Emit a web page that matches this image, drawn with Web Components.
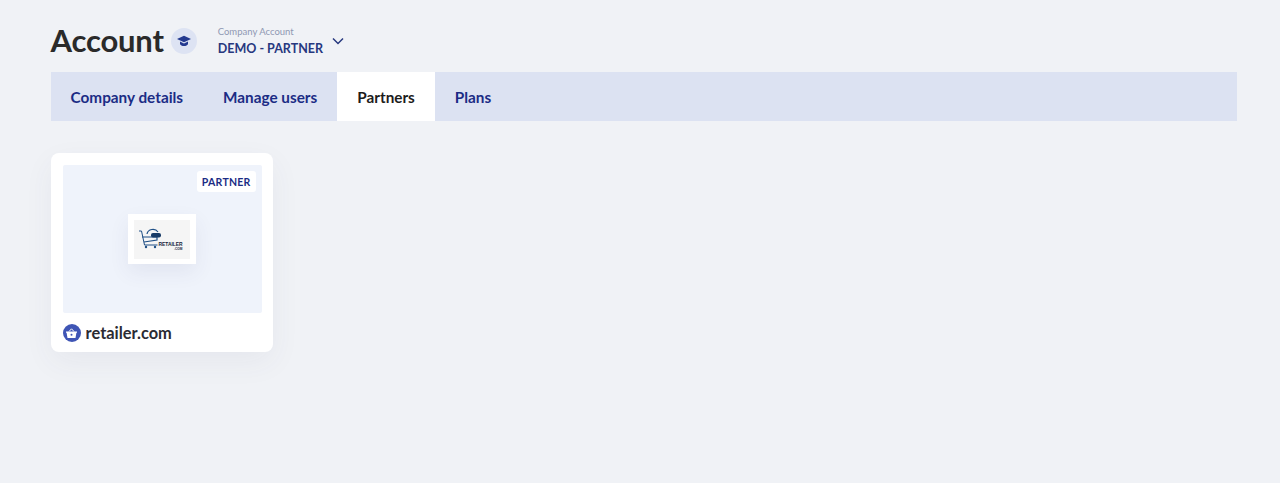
<!DOCTYPE html>
<html lang="en">
<head>
<meta charset="utf-8">
<title>Account</title>
<style>
    html, body { margin: 0; padding: 0; height: 100%; }
    body { background: #f0f2f6; font-family: Lato, "Open Sans", sans-serif; color: #2b2b2b; }
</style>
</head>
<body>
<account-page>
    <account-header slot="header" heading="Account" label="Company Account" company="DEMO - PARTNER"></account-header>
    <tab-bar slot="tabs">
        <tab-item>Company details</tab-item>
        <tab-item>Manage users</tab-item>
        <tab-item active>Partners</tab-item>
        <tab-item>Plans</tab-item>
    </tab-bar>
    <partner-card name="retailer.com" badge="PARTNER"></partner-card>
</account-page>

<script>
'use strict';

(function() {
    class AccountPage extends HTMLElement {
        constructor() {
            super();
            const shadow = this.attachShadow({ mode: 'open' });
            shadow.innerHTML = `
                <style>
                    :host { display: block; padding: 0 43.5px 0 50.6px; }
                    .cards { display: flex; gap: 24px; padding-top: 32px; }
                </style>
                <slot name="header"></slot>
                <slot name="tabs"></slot>
                <div class="cards"><slot></slot></div>
            `;
        }
    }

    class AccountHeader extends HTMLElement {
        constructor() {
            super();
            const shadow = this.attachShadow({ mode: 'open' });
            shadow.innerHTML = `
                <style>
                    :host { display: flex; align-items: flex-start; height: 72px; box-sizing: border-box; }
                    h1 { margin: 21px 0 0; font-size: 31px; line-height: 38px; font-weight: 700; color: #2a2a2a; letter-spacing: -.2px; }
                    .cap { width: 26px; height: 26px; margin: 28px 0 0 7px; border-radius: 50%; background: #dde3f3; display: flex; align-items: center; justify-content: center; }
                    .company { margin: 26px 0 0 21px; }
                    .label { font-size: 9.5px; line-height: 12px; color: #8f98b3; }
                    .name { font-size: 12.5px; line-height: 16px; margin-top: 3px; font-weight: 700; color: #27387f; }
                    .chev { margin: 37px 0 0 9px; display: block; }
                </style>
                <h1>${this.getAttribute('heading')}</h1>
                <span class="cap">
                    <svg width="14" height="12" viewBox="0 0 14 12"><path fill="#23398f" d="M7 .8 14 4 7 7.2 0 4z"/><path fill="#23398f" d="M3 6.6 7 8.4l4-1.8v2.6C10 10.5 8.500 11 7 11s-3-.5-4-1.800z"/></svg>
                </span>
                <div class="company">
                    <div class="label">${this.getAttribute('label')}</div>
                    <div class="name">${this.getAttribute('company')}</div>
                </div>
                <svg class="chev" width="12" height="8" viewBox="0 0 12 8"><path d="M1 1.5 6 6.5 11 1.5" fill="none" stroke="#27387f" stroke-width="1.5"/></svg>
            `;
        }
    }

    class TabBar extends HTMLElement {
        constructor() {
            super();
            const shadow = this.attachShadow({ mode: 'open' });
            shadow.innerHTML = `
                <style>
                    :host { display: flex; height: 49px; background: #dce2f2; }
                </style>
                <slot></slot>
            `;
        }
    }

    class TabItem extends HTMLElement {
        constructor() {
            super();
            const shadow = this.attachShadow({ mode: 'open' });
            shadow.innerHTML = `
                <style>
                    :host { display: flex; align-items: center; padding: 0 20px; font-size: 15.3px; font-weight: 700; color: #1b2c85; }
                    :host([active]) { background: #fff; color: #1c1c1c; }
                </style>
                <slot></slot>
            `;
        }
    }

    class PartnerCard extends HTMLElement {
        constructor() {
            super();
            const shadow = this.attachShadow({ mode: 'open' });
            shadow.innerHTML = `
                <style>
                    :host { display: block; width: 222px; height: 199px; box-sizing: border-box; padding: 12px 11px 0 12px; background: #fff; border-radius: 8px; box-shadow: 0 10px 30px rgba(60, 70, 110, .06); }
                    .image { position: relative; height: 148px; background: #eff3fb; border-radius: 2px; display: flex; align-items: center; justify-content: center; }
                    .badge { position: absolute; top: 6px; right: 6px; height: 21px; padding: 0 5px; display: flex; align-items: center; background: #fff; border-radius: 3px; font-size: 10.5px; font-weight: 700; letter-spacing: .25px; color: #1b2c85; }
                    .logo { width: 68px; height: 50px; margin-right: 1px; box-sizing: border-box; padding: 6px 6px 5px; background: #fff; box-shadow: 0 8px 20px rgba(60, 70, 110, .08); }
                    .logo svg { display: block; }
                    .foot { display: flex; align-items: center; gap: 5px; margin-top: 10px; font-size: 16.4px; line-height: 20px; font-weight: 700; color: #2b2b33; }
                    .basket { width: 18px; height: 18px; border-radius: 50%; background: #3f55b5; display: flex; align-items: center; justify-content: center; }
                </style>
                <div class="image">
                    <span class="badge">${this.getAttribute('badge')}</span>
                    <div class="logo">
                        <svg width="56" height="39" viewBox="0 0 56 39">
                            <rect width="56" height="39" fill="#f5f5f5"/>
                            <path d="M5 11h2.500l3 14h13" fill="none" stroke="#1f4f86" stroke-width="1"/>
                            <path d="M8 17h15v3l-13 2" fill="none" stroke="#1f4f86" stroke-width="1.2"/>
                            <circle cx="12" cy="27" r="1.2" fill="#1f4f86"/>
                            <circle cx="21" cy="27" r="1.200" fill="#1f4f86"/>
                            <path d="M13 14a6 5.500 0 0 1 11-2" fill="none" stroke="#1f4f86" stroke-width="1.200"/>
                            <rect x="17" y="13" width="10" height="4.500" rx="2" fill="#173a66"/>
                            <text x="24.500" y="25.500" font-family="Liberation Sans, sans-serif" font-size="4.900" font-weight="700" fill="#14233c">RETAILER</text>
                            <text x="40" y="30" font-family="Liberation Sans, sans-serif" font-size="3.200" font-weight="700" fill="#14233c">.COM</text>
                        </svg>
                    </div>
                </div>
                <div class="foot">
                    <span class="basket">
                        <svg width="11" height="10" viewBox="0 0 11 10"><path fill="#fff" d="M0 3.5h11v1.2h-.6L9.500 10h-8L.6 4.700H0z"/><path d="M3 3.500 5.500.8 8 3.500" fill="none" stroke="#fff" stroke-width="1"/><circle cx="5.500" cy="6.800" r="1" fill="#3f55b5"/></svg>
                    </span>
                    <span>${this.getAttribute('name')}</span>
                </div>
            `;
        }
    }

    customElements.define('account-page', AccountPage);
    customElements.define('account-header', AccountHeader);
    customElements.define('tab-bar', TabBar);
    customElements.define('tab-item', TabItem);
    customElements.define('partner-card', PartnerCard);
})();
</script>
</body>
</html>
